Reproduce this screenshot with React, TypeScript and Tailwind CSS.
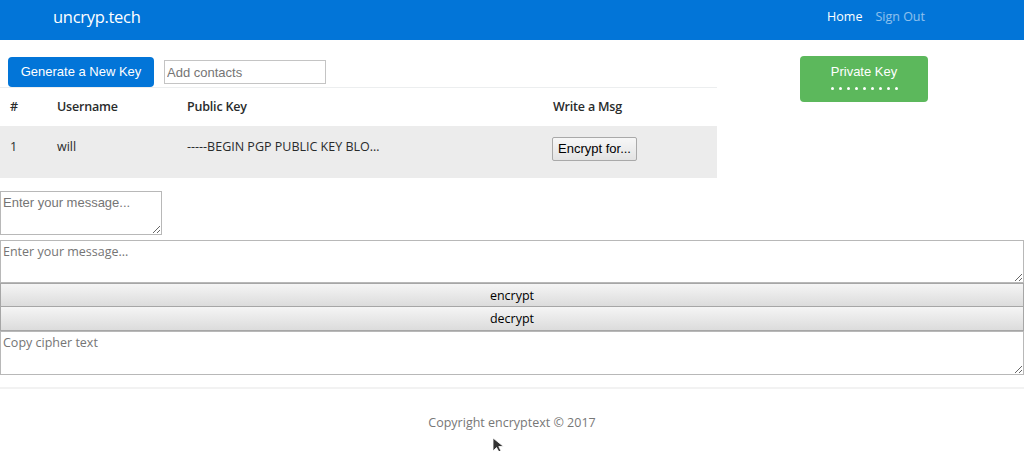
import React from "react";

const UB = { fontFamily: '"Open Sans", "DejaVu Sans", sans-serif' };
const AR = { fontFamily: '"Liberation Sans", Arial, sans-serif' };

export default function App() {
  return (
    <div className="relative min-h-screen bg-white text-[#292b2c]" style={UB}>
      <nav className="h-10 bg-[#0275d8] flex items-start">
        <div className="pl-[53px] pt-[5px] text-white text-[16.5px] tracking-[-0.3px] leading-6">uncryp.tech</div>
        <div className="ml-auto flex gap-[13px] pr-[99px] pt-[7px] text-[12.5px] leading-5">
          <span className="text-white">Home</span>
          <span className="text-white/55">Sign Out</span>
        </div>
      </nav>

      <div className="flex">
        <div className="w-[717px]">
          <div className="flex items-start pl-2 pt-[17px] gap-[10px]">
            <button
              className="h-[30px] w-[146px] rounded-[4px] bg-[#0275d8] text-white text-[13px]"
              style={AR}
            >
              Generate a New Key
            </button>
            <input
              className="mt-[3px] h-6 w-[162px] border border-[#c4c4c4] px-[2px] text-[13px] placeholder:text-[#757575] outline-none"
              style={AR}
              placeholder="Add contacts"
            />
          </div>
          <table className="w-full border-collapse text-[12.5px]">
            <thead>
              <tr className="h-[38px] border-t border-[#eceeef]">
                <th className="w-[47px] pl-[10px] pt-[2px] text-left font-semibold tracking-[-0.2px]">#</th>
                <th className="w-[130px] pl-[10px] pt-[2px] text-left font-semibold tracking-[-0.2px]">Username</th>
                <th className="w-[366px] pl-[10px] pt-[2px] text-left font-semibold tracking-[-0.2px]">Public Key</th>
                <th className="pl-[10px] pt-[2px] text-left font-semibold tracking-[-0.2px]">Write a Msg</th>
              </tr>
            </thead>
            <tbody>
              <tr className="h-[52px] bg-[#ececec] align-top">
                <td className="pl-[10px] pt-[11px] leading-5">1</td>
                <td className="pl-[10px] pt-[11px] leading-5">will</td>
                <td className="pl-[10px] pt-[11px] leading-5">-----BEGIN PGP PUBLIC KEY BLO…</td>
                <td className="pl-[9px] pt-[11px]">
                  <button
                    className="h-6 w-[85px] border border-[#a9a9a9] rounded-[2px] bg-gradient-to-b from-[#f7f7f7] to-[#e3e3e3] text-[13px] text-black"
                    style={AR}
                  >
                    Encrypt for...
                  </button>
                </td>
              </tr>
            </tbody>
          </table>
        </div>
        <div className="pl-[83px] pt-4">
          <button
            className="w-[128px] h-[46px] rounded-[4px] bg-[#5cb85c] text-white flex flex-col items-center pt-[8px]"
            style={AR}
          >
            <span className="text-[13px] leading-4">Private Key</span>
            <span className="flex gap-[5px] mt-[7px]">
              {Array.from({ length: 9 }).map((_, i) => (
                <span key={i} className="block w-[3px] h-[3px] rounded-full bg-white" />
              ))}
            </span>
          </button>
        </div>
      </div>

      <div className="pt-[13px]">
        <textarea
          className="block w-[162px] h-[44px] border border-[#b8b8b8] px-[2px] py-[1px] text-[13px] placeholder:text-[#757575] outline-none"
          style={AR}
          placeholder="Enter your message..."
        />
        <textarea
          className="block mt-[5px] w-full h-[43px] border border-[#b8b8b8] px-[2px] py-[2px] text-[12.5px] placeholder:text-[#757575] outline-none"
          placeholder="Enter your message..."
        />
        <button className="block w-full h-6 border border-[#a6a6a6] bg-gradient-to-b from-[#f5f5f5] to-[#dcdcdc] text-[12.5px] leading-[22px] pt-[1px] text-black">
          encrypt
        </button>
        <button className="block w-full h-6 border border-[#a6a6a6] border-t-0 bg-gradient-to-b from-[#f5f5f5] to-[#dcdcdc] text-[12.5px] leading-[22px] pt-[1px] text-black">
          decrypt
        </button>
        <textarea
          className="block w-full h-[44px] border border-[#b8b8b8] px-[2px] py-[2px] text-[12.5px] placeholder:text-[#757575] outline-none"
          placeholder="Copy cipher text"
        />
      </div>

      <div className="mt-3 border-t-2 border-[#f2f2f2]" />
      <footer className="pt-[25px] text-center text-[12.5px] text-[#777]">
        Copyright encryptext © 2017
      </footer>

      <svg
        className="absolute left-[492px] top-[437px]"
        width="14"
        height="16"
        viewBox="0 0 14 16"
      >
        <path d="M1 1 L1 14 L4.5 10.5 L7 15 L9 14 L6.8 9.5 L11.5 9.5 Z" fill="#333" stroke="#fff" strokeWidth="0.8" />
      </svg>
    </div>
  );
}
